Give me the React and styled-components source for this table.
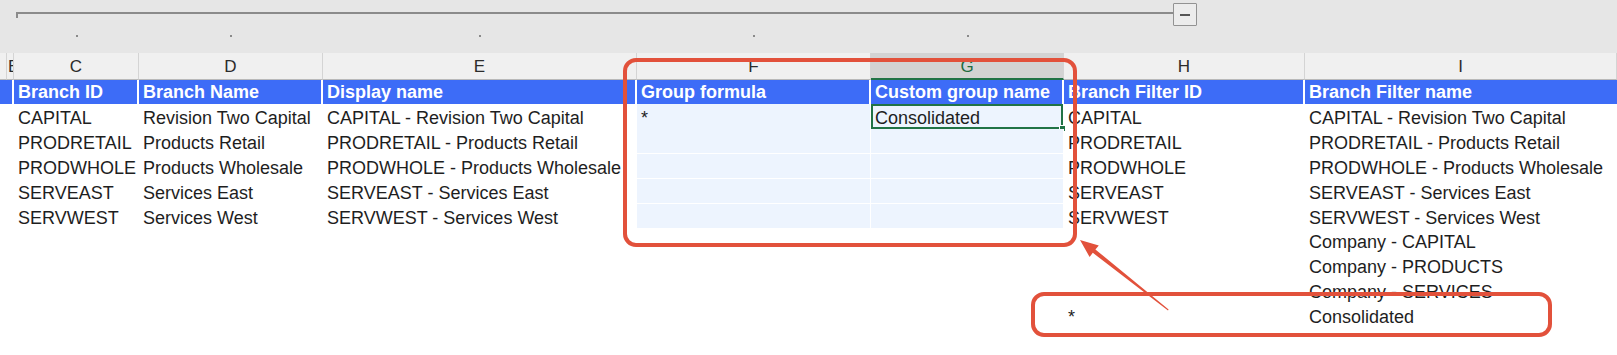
import styled, { createGlobalStyle } from 'styled-components';

const COLS = '7px 7px 125px 184px 314px 234px 193px 241px 312px';
const ROW_HEIGHTS = [25, 25, 25, 25, 24, 25, 25, 25, 24];
const GREEN = '#217346';
const RED = '#e2513b';

const GlobalStyle = createGlobalStyle`
  html, body { margin: 0; padding: 0; background: #fff; }
  body { font-family: "Liberation Sans", Arial, sans-serif; }
`;

const Sheet = styled.div`
  position: relative;
  width: 1617px;
  height: 355px;
  overflow: hidden;
  background: #fff;
  color: #1e1e1e;
`;

const OutlineArea = styled.div`
  height: 53px;
  background: #e6e6e6;
`;

const OutlineTrack = styled.div`
  display: flex;
  align-items: flex-start;
  width: 1197px;
  height: 27px;
  padding: 3px 0 0 16px;
  box-sizing: border-box;
`;

const Bracket = styled.div`
  flex: 1;
  height: 4px;
  margin-top: 9px;
  border-top: 2px solid #8b8b8b;
  border-left: 2px solid #8b8b8b;
`;

const CollapseBtn = styled.div`
  width: 24px;
  height: 23px;
  box-sizing: border-box;
  border: 1px solid #929292;
  border-radius: 1px;
  background: #ececec;
  display: flex;
  align-items: center;
  justify-content: center;
  &::before {
    content: '';
    width: 10px;
    height: 2px;
    background: #555;
  }
`;

const Row = styled.div`
  display: grid;
  grid-template-columns: ${COLS};
  height: ${(p) => p.$h}px;
`;

const DotCell = styled.div`
  display: flex;
  justify-content: center;
  padding-top: 8px;
  &::before {
    content: '';
    display: ${(p) => (p.$dot ? 'block' : 'none')};
    width: 2px;
    height: 2px;
    background: #8a8a8a;
  }
`;

const Letter = styled.div`
  display: flex;
  align-items: center;
  justify-content: ${(p) => (p.$clip ? 'flex-start' : 'center')};
  padding-left: ${(p) => (p.$clip ? '1px' : '0')};
  padding-top: 2px;
  overflow: hidden;
  box-sizing: border-box;
  font-size: 17px;
  color: ${(p) => (p.$active ? '#1d6b3f' : '#2b2b2b')};
  background: ${(p) => (p.$active ? '#d3d3d3' : '#f0f0f0')};
  border-right: 1px solid #d4d4d4;
  border-bottom: ${(p) => (p.$active ? `2px solid ${GREEN}` : '1px solid #b9b9b9')};
`;

const HeadCell = styled.div`
  grid-column: span ${(p) => p.$span || 1};
  box-sizing: border-box;
  background: #3d6cf7;
  color: #fff;
  font-weight: bold;
  font-size: 18px;
  line-height: 23px;
  padding: 1px 0 0 4px;
  white-space: nowrap;
  overflow: hidden;
  border-right: ${(p) => (p.$last ? 'none' : '2px solid #fff')};
`;

const Cell = styled.div`
  position: relative;
  box-sizing: border-box;
  font-size: 18px;
  line-height: 22px;
  padding: 3px 0 0 4px;
  white-space: nowrap;
  background: ${(p) => (p.$fill ? '#edf4fe' : 'transparent')};
  border-right: ${(p) => (p.$fill ? '1px solid #fff' : 'none')};
  border-bottom: ${(p) => (p.$fill ? '1px solid #fff' : 'none')};
  box-shadow: ${(p) => (p.$selected ? `inset 0 0 0 2px ${GREEN}` : 'none')};
  &::after {
    content: '';
    display: ${(p) => (p.$selected ? 'block' : 'none')};
    position: absolute;
    right: -3px;
    bottom: -3px;
    width: 5px;
    height: 5px;
    background: ${GREEN};
    border: 1px solid #fff;
  }
`;

const Callout = styled.div`
  position: absolute;
  left: ${(p) => p.$x}px;
  top: ${(p) => p.$y}px;
  width: ${(p) => p.$w}px;
  height: ${(p) => p.$h}px;
  box-sizing: border-box;
  border: 4px solid ${RED};
  border-radius: 13px;
  pointer-events: none;
`;

const ArrowLayer = styled.svg`
  position: absolute;
  left: 0;
  top: 0;
  pointer-events: none;
`;

const letters = ['', 'B', 'C', 'D', 'E', 'F', 'G', 'H', 'I'];
const headers = ['Branch ID', 'Branch Name', 'Display name', 'Group formula', 'Custom group name', 'Branch Filter ID', 'Branch Filter name'];

const rows = [
  ['CAPITAL', 'Revision Two Capital', 'CAPITAL - Revision Two Capital', '*', 'Consolidated', 'CAPITAL', 'CAPITAL - Revision Two Capital'],
  ['PRODRETAIL', 'Products Retail', 'PRODRETAIL - Products Retail', '', '', 'PRODRETAIL', 'PRODRETAIL - Products Retail'],
  ['PRODWHOLE', 'Products Wholesale', 'PRODWHOLE - Products Wholesale', '', '', 'PRODWHOLE', 'PRODWHOLE - Products Wholesale'],
  ['SERVEAST', 'Services East', 'SERVEAST - Services East', '', '', 'SERVEAST', 'SERVEAST - Services East'],
  ['SERVWEST', 'Services West', 'SERVWEST - Services West', '', '', 'SERVWEST', 'SERVWEST - Services West'],
  ['', '', '', '', '', '', 'Company - CAPITAL'],
  ['', '', '', '', '', '', 'Company - PRODUCTS'],
  ['', '', '', '', '', '', 'Company - SERVICES'],
  ['', '', '', '', '', '*', 'Consolidated'],
];

export default function App() {
  return (
    <>
      <GlobalStyle />
      <Sheet>
        <OutlineArea>
          <OutlineTrack>
            <Bracket />
            <CollapseBtn />
          </OutlineTrack>
          <Row $h={26}>
            {letters.map((l, i) => (
              <DotCell key={i} $dot={i >= 2 && i <= 6} />
            ))}
          </Row>
        </OutlineArea>

        <Row $h={27}>
          {letters.map((l, i) => (
            <Letter key={i} $clip={i === 1} $active={l === 'G'}>
              {l}
            </Letter>
          ))}
        </Row>

        <Row $h={24}>
          <HeadCell $span={2} />
          {headers.map((h, i) => (
            <HeadCell key={h} $last={i === headers.length - 1}>
              {h}
            </HeadCell>
          ))}
        </Row>

        {rows.map((r, ri) => (
          <Row key={ri} $h={ROW_HEIGHTS[ri]}>
            <Cell />
            <Cell />
            {r.map((v, ci) => (
              <Cell
                key={ci}
                $fill={ri < 5 && (ci === 3 || ci === 4)}
                $selected={ri === 0 && ci === 4}
              >
                {v}
              </Cell>
            ))}
          </Row>
        ))}

        <Callout $x={623} $y={58} $w={454} $h={189} />
        <Callout $x={1031} $y={292} $w={521} $h={45} />

        <ArrowLayer width="1617" height="355" viewBox="0 0 1617 355">
          <polygon
            fill={RED}
            points="1080,240 1098.8,245.4 1095.4,249.4 1168.6,309.6 1168,310.4 1092.8,252.8 1089.6,257"
          />
        </ArrowLayer>
      </Sheet>
    </>
  );
}
